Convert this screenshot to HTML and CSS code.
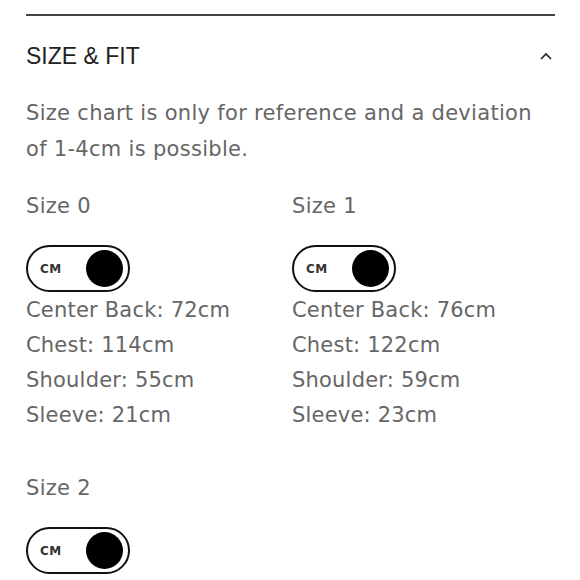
FILE: index.html
```html
<!DOCTYPE html>
<html>
<head>
<meta charset="utf-8">
<link rel="stylesheet" href="styles.css">
</head>
<body>
<section class="panel">
  <div class="header">
    <h2 class="title">SIZE &amp; FIT</h2>
    <svg class="chevron" width="12" height="8" viewBox="0 0 12 8"><path d="M1 7 L6 2 L11 7" fill="none" stroke="#222" stroke-width="1.6"/></svg>
  </div>
  <p class="note">Size chart is only for reference and a deviation of 1-4cm is possible.</p>
  <div class="grid">
    <div class="size">
      <div class="label">Size 0</div>
      <div class="toggle"><span class="unit">CM</span><span class="knob"></span></div>
      <ul class="meas">
        <li>Center Back: 72cm</li>
        <li>Chest: 114cm</li>
        <li>Shoulder: 55cm</li>
        <li>Sleeve: 21cm</li>
      </ul>
    </div>
    <div class="size">
      <div class="label">Size 1</div>
      <div class="toggle"><span class="unit">CM</span><span class="knob"></span></div>
      <ul class="meas">
        <li>Center Back: 76cm</li>
        <li>Chest: 122cm</li>
        <li>Shoulder: 59cm</li>
        <li>Sleeve: 23cm</li>
      </ul>
    </div>
    <div class="size">
      <div class="label">Size 2</div>
      <div class="toggle"><span class="unit">CM</span><span class="knob"></span></div>
    </div>
  </div>
</section>
</body>
</html>
```

FILE: styles.css
```css
html, body {
  margin: 0;
  background: #fff;
}
body {
  font-family: "DejaVu Sans", sans-serif;
  color: #666;
}
.panel {
  margin: 14px 25px 0 26px;
  border-top: 2px solid #444;
}
.header {
  display: flex;
  align-items: center;
  justify-content: space-between;
  padding: 25px 3px 24px 0;
  height: 30px;
}
.title {
  margin: 0;
  font-family: "Liberation Sans", sans-serif;
  font-size: 23px;
  font-weight: 400;
  color: #222;
  line-height: 30px;
}
.chevron {
  display: block;
}
.note {
  margin: 0;
  max-width: 515px;
  font-size: 21px;
  line-height: 36px;
  letter-spacing: 0.3px;
  color: #666;
}
.grid {
  display: grid;
  grid-template-columns: 266px 1fr;
  row-gap: 37px;
  margin-top: 21px;
}
.label {
  font-size: 21px;
  line-height: 36px;
  letter-spacing: 0.3px;
}
.toggle {
  margin-top: 21px;
  box-sizing: border-box;
  width: 104px;
  height: 47px;
  border: 2px solid #111;
  border-radius: 24px;
  display: flex;
  align-items: center;
  justify-content: space-between;
  padding: 0 5px 0 12px;
}
.unit {
  font-size: 12px;
  font-weight: 700;
  color: #333;
  letter-spacing: 0.5px;
}
.knob {
  width: 37px;
  height: 37px;
  border-radius: 50%;
  background: #000;
}
.meas {
  list-style: none;
  margin: 1px 0 0;
  padding: 0;
}
.meas li {
  font-size: 21px;
  line-height: 35px;
  letter-spacing: 0.2px;
}
```
